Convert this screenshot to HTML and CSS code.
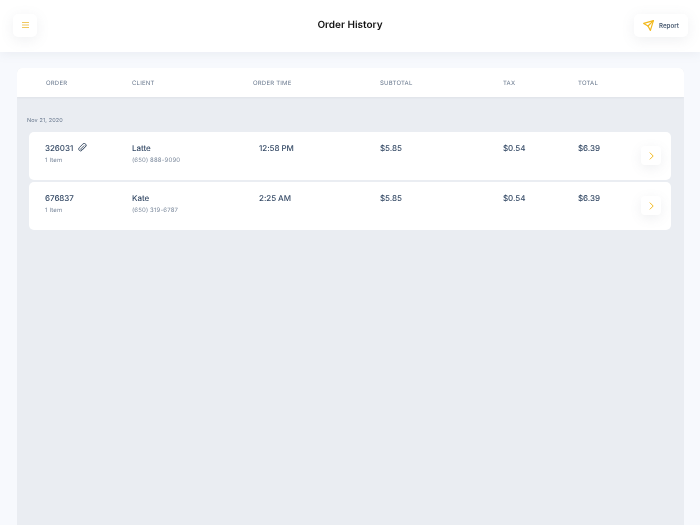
FILE: index.html
```html
<!DOCTYPE html>
<html lang="en">
<head>
<meta charset="utf-8">
<title>Order History</title>
<link rel="stylesheet" href="styles.css">
</head>
<body>
<header class="topbar">
  <button class="tool menu" aria-label="Menu">
    <svg width="7" height="6" viewBox="0 0 7 6"><path d="M0 .5h7M0 3h7M0 5.5h7" stroke="#f0c75e" stroke-width="1" fill="none"/></svg>
  </button>
  <h1 class="title soft">Order History</h1>
  <button class="tool report">
    <svg width="11" height="11" viewBox="0 0 11 11" fill="none" stroke="#f2b91e" stroke-width="1.2" stroke-linejoin="round" stroke-linecap="round"><path d="M.7 3.4 10.4.6 7.4 10.4 5 6Z"/><path d="M5 6 10.4.6"/></svg>
    <span class="soft">Report</span>
  </button>
</header>
<main class="panel">
  <div class="head">
    <span class="c1 soft">ORDER</span><span class="c2 soft">CLIENT</span><span class="c3 soft">ORDER TIME</span><span class="c4 soft">SUBTOTAL</span><span class="c5 soft">TAX</span><span class="c6 soft">TOTAL</span>
  </div>
  <div class="body">
    <p class="date soft">Nov 21, 2020</p>
    <article class="row">
      <div class="c1 cell soft"><div class="main">326031<svg class="clip" width="9" height="9" viewBox="0 0 9 9" fill="none" stroke="#4c5d73" stroke-width="1" stroke-linecap="round"><path d="M8.3 2.8 4 7.3a1.9 1.9 0 0 1-2.8-2.6L4.9 1a1.8 1.8 0 0 1 2.7 2.4L3.9 6.9a.8.8 0 0 1-1.1-1L6 2.7"/></svg></div><div class="sub">1 Item</div></div>
      <div class="c2 cell soft"><div class="main">Latte</div><div class="sub">(650) 888-9090</div></div>
      <div class="c3 cell soft"><div class="main">12:58 PM</div></div>
      <div class="c4 cell soft"><div class="main">$5.85</div></div>
      <div class="c5 cell soft"><div class="main">$0.54</div></div>
      <div class="c6 cell soft"><div class="main">$6.39</div></div>
      <button class="go" aria-label="Open"><svg width="5" height="8" viewBox="0 0 5 8" fill="none" stroke="#f2b91e" stroke-width="1"><path d="M.8.6 4.2 4 .8 7.4"/></svg></button>
    </article>
    <article class="row">
      <div class="c1 cell soft"><div class="main">676837</div><div class="sub">1 Item</div></div>
      <div class="c2 cell soft"><div class="main">Kate</div><div class="sub">(650) 319-6787</div></div>
      <div class="c3 cell soft"><div class="main">2:25 AM</div></div>
      <div class="c4 cell soft"><div class="main">$5.85</div></div>
      <div class="c5 cell soft"><div class="main">$0.54</div></div>
      <div class="c6 cell soft"><div class="main">$6.39</div></div>
      <button class="go" aria-label="Open"><svg width="5" height="8" viewBox="0 0 5 8" fill="none" stroke="#f2b91e" stroke-width="1"><path d="M.8.6 4.2 4 .8 7.4"/></svg></button>
    </article>
  </div>
</main>
</body>
</html>
```
FILE: styles.css
```css
* { box-sizing: border-box; }
html, body { height: 100%; }
body {
  margin: 0;
  background: #f7f9fd;
  font-family: Inter, "Liberation Sans", sans-serif;
  text-rendering: geometricPrecision;
  overflow: hidden;
  display: flex;
  flex-direction: column;
}
button { font: inherit; border: 0; padding: 0; cursor: pointer; }
.soft { filter: blur(.25px); }
.topbar {
  height: 52px;
  flex: none;
  background: #fff;
  display: flex;
  align-items: center;
  justify-content: space-between;
  padding: 0 12px 2px 13px;
  position: relative;
  box-shadow: 0 2px 10px rgba(120,130,150,.1);
  z-index: 1;
}
.tool {
  height: 23px;
  background: #fff;
  border-radius: 5px;
  box-shadow: 0 3px 14px rgba(110,120,140,.11);
  display: flex;
  align-items: center;
  justify-content: center;
}
.menu { width: 24px; }
.report {
  width: 54px;
  gap: 5px;
  font-size: 6.2px;
  font-weight: 600;
  color: #4c5d73;
}
.title {
  margin: 0;
  font-size: 10px;
  font-weight: 600;
  color: #111;
  position: absolute;
  left: 0;
  right: 0;
  top: 18px;
  text-align: center;
  line-height: 14px;
}
.panel {
  flex: 1;
  margin: 16px 16px 0 17px;
  display: flex;
  flex-direction: column;
  border-radius: 5px 5px 0 0;
  background: #eaedf2;
  overflow: hidden;
}
.head {
  height: 29px;
  flex: none;
  background: #fff;
  display: flex;
  align-items: center;
  padding-top: 1px;
  font-size: 6px;
  letter-spacing: .2px;
  color: #65758b;
  box-shadow: 0 1px 2px rgba(120,130,150,.1);
}
.head span { flex: none; }
.head .c1 { margin-left: 29px; width: 86px; }
.head .c2 { width: 121px; }
.head .c3 { width: 127px; }
.head .c4 { width: 123px; }
.head .c5 { width: 75px; }
.body { flex: 1; padding: 0 13px 0 12px; }
.date {
  margin: 20px 0 7px -2px;
  font-size: 5.5px;
  line-height: 8px;
  color: #65758b;
  letter-spacing: .12px;
}
.row {
  height: 48px;
  margin-bottom: 2px;
  background: #fff;
  border-radius: 5px;
  display: flex;
  padding-top: 10px;
  position: relative;
}
.cell { flex: none; }
.row .c1 { margin-left: 16px; width: 87px; }
.row .c2 { width: 127px; }
.row .c3 { width: 121px; }
.row .c4 { width: 123px; }
.row .c5 { width: 75px; }
.main {
  font-size: 8px;
  line-height: 13px;
  font-weight: 500;
  color: #354a66;
  letter-spacing: -.05px;
}
.sub {
  font-size: 6px;
  line-height: 9px;
  margin-top: 1px;
  color: #7a889b;
  letter-spacing: .15px;
}
.clip { margin-left: 5px; vertical-align: -1px; }
.go {
  position: absolute;
  right: 10px;
  top: 14px;
  width: 20px;
  height: 19px;
  background: #fff;
  border-radius: 4px;
  box-shadow: 0 3px 12px rgba(110,120,140,.11);
  display: flex;
  align-items: center;
  justify-content: center;
}
```
